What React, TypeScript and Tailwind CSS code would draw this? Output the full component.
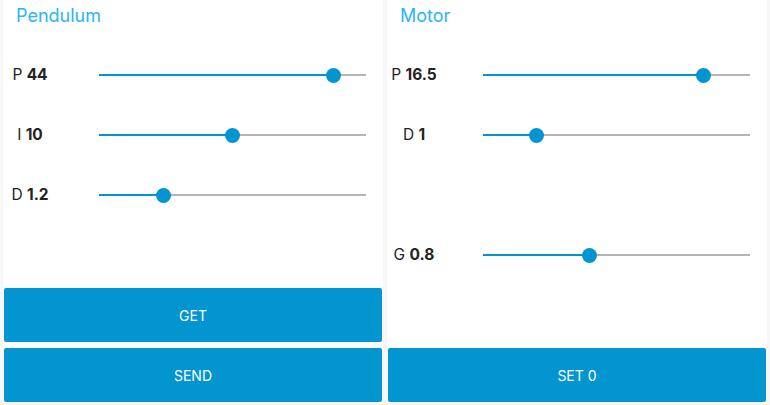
import React from "react";

type Row = { name: string; value: string; frac: number } | null;

const BLUE = "bg-[#0395d0]";

function SliderRow({ row }: { row: Row }) {
  if (!row) return <div className="h-[60px]" />;
  const thumbX = Math.round(row.frac * 267);
  return (
    <div className="h-[60px] flex items-center">
      <div className="w-[54px] text-center text-[15.5px] text-[#222] whitespace-nowrap">
        {row.name} <span className="font-bold">{row.value}</span>
      </div>
      <div className="ml-[42px] w-[267px] relative h-[16px]">
        <div className="absolute left-0 right-0 top-[7px] h-[2px] bg-[#b5b5b5]" />
        <div
          className={`absolute left-0 top-[7px] h-[2px] ${BLUE}`}
          style={{ width: thumbX }}
        />
        <div
          className={`absolute top-[0.5px] w-[15px] h-[15px] rounded-full ${BLUE}`}
          style={{ left: thumbX - 7.5 }}
        />
      </div>
    </div>
  );
}

function Button({ label }: { label: string }) {
  return (
    <div
      className={`h-[54px] ${BLUE} rounded-[2px] flex items-center justify-center text-white text-[14px]`}
    >
      {label}
    </div>
  );
}

function Panel({
  title,
  rows,
  buttons,
}: {
  title: string;
  rows: Row[];
  buttons: string[];
}) {
  return (
    <div className="flex-1 bg-white flex flex-col">
      <div className="h-[45px] pl-[13px] pt-[5px]">
        <div className="text-[18px] leading-[22px] text-[#29b6f6]">{title}</div>
      </div>
      {rows.map((r, i) => (
        <SliderRow key={i} row={r} />
      ))}
      <div className="mt-auto px-[1px] pb-[1px] flex flex-col gap-[6px]">
        {buttons.map((b) => (
          <Button key={b} label={b} />
        ))}
      </div>
    </div>
  );
}

export default function App() {
  return (
    <div
      className="w-[770px] h-[405px] bg-[#f7f7f7] flex gap-[4px] px-[3px] pb-[2px] overflow-hidden"
      style={{ fontFamily: "Inter, Roboto, 'Liberation Sans', sans-serif" }}
    >
      <Panel
        title="Pendulum"
        rows={[
          { name: "P", value: "44", frac: 0.876 },
          { name: "I", value: "10", frac: 0.498 },
          { name: "D", value: "1.2", frac: 0.24 },
        ]}
        buttons={["GET", "SEND"]}
      />
      <Panel
        title="Motor"
        rows={[
          { name: "P", value: "16.5", frac: 0.824 },
          { name: "D", value: "1", frac: 0.199 },
          null,
          { name: "G", value: "0.8", frac: 0.397 },
        ]}
        buttons={["SET 0"]}
      />
    </div>
  );
}
